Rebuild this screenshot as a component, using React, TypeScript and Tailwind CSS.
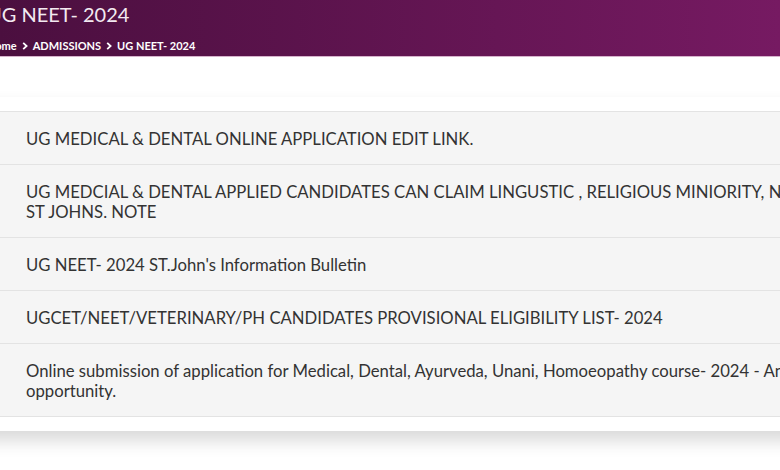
import React from "react";

const notices = [
  "UG MEDICAL & DENTAL ONLINE APPLICATION EDIT LINK.",
  "UG MEDCIAL & DENTAL APPLIED CANDIDATES CAN CLAIM LINGUSTIC , RELIGIOUS MINIORITY, NRI QUOTA FOR ST JOHNS. NOTE",
  "UG NEET- 2024 ST.John's Information Bulletin",
  "UGCET/NEET/VETERINARY/PH CANDIDATES PROVISIONAL ELIGIBILITY LIST- 2024",
  "Online submission of application for Medical, Dental, Ayurveda, Unani, Homoeopathy course- 2024 - Another opportunity.",
];

const Chevron = () => (
  <svg width="6" height="8" viewBox="0 0 6 8" className="mx-[5px] inline-block">
    <path d="M1.2 0.8 L4.6 4 L1.2 7.2" fill="none" stroke="#fff" strokeWidth="1.8" />
  </svg>
);

const App = () => {
  return (
    <div className="w-[780px] h-[470px] overflow-hidden bg-white font-['Lato',sans-serif]">
      <div className="h-[57px] bg-gradient-to-r from-[#4b0f3f] to-[#761a62] border-b border-[#d6b3cc]">
        <div className="ml-[-13px]">
          <h1 className="text-[20px] leading-[28px] text-[#f3eaf1] whitespace-nowrap">UG NEET- 2024</h1>
          <div className="mt-[10px] flex items-center text-[11px] font-bold text-white whitespace-nowrap">
            <span>Home</span>
            <Chevron />
            <span>ADMISSIONS</span>
            <Chevron />
            <span>UG NEET- 2024</span>
          </div>
        </div>
      </div>

      <div className="mt-[40px] ml-[-20px] w-[940px] bg-white pt-[14px] pb-[14px] shadow-[0_10px_16px_rgba(0,0,0,0.15)]">
        {notices.map((n) => (
          <div key={n} className="bg-[#f5f5f5] border-t border-[#e3e3e3] last:border-b pt-[17px] pb-[15px] pl-[46px]">
            <p className="w-[876px] text-[16.7px] leading-[20px] text-[#333333]">{n}</p>
          </div>
        ))}
      </div>
    </div>
  );
};

export default App;
